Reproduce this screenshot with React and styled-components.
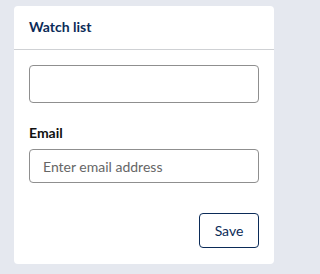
import React from "react";
import styled, { createGlobalStyle } from "styled-components";

const GlobalStyle = createGlobalStyle`
    html, body {
        margin: 0;
        padding: 0;
        background: #e5e8ef;
        font-family: Lato, "Noto Sans", sans-serif;
    }
`;

const Page = styled.div`
    padding: 6px 13px 10px 14px;
`;

const Card = styled.div`
    background: #fff;
    border-radius: 4px;
    width: 260px;
`;

const Header = styled.div`
    height: 43px;
    display: flex;
    align-items: center;
    padding: 0 15px;
    border-bottom: 1px solid #cfd1d4;
`;

const Title = styled.h3`
    margin: 0 0 2px;
    font-size: 14px;
    font-weight: 700;
    color: #0b2b58;
`;

const Body = styled.div`
    padding: 15px 15px 16px;
    display: flex;
    flex-direction: column;
`;

const Input = styled.input`
    box-sizing: border-box;
    width: 100%;
    height: ${(p) => p.$height}px;
    border: 1px solid #8f8f8f;
    border-radius: 4px;
    padding: 0 13px;
    font-family: inherit;
    font-size: 14px;
    color: #333;
    outline: none;
    &::placeholder {
        color: #666;
    }
`;

const Label = styled.label`
    margin: 20px 0 6px;
    font-size: 14px;
    line-height: 20px;
    font-weight: 700;
    color: #111;
`;

const Actions = styled.div`
    display: flex;
    justify-content: flex-end;
    margin-top: 30px;
`;

const Button = styled.button`
    width: 60px;
    height: 35px;
    background: #fff;
    border: 1px solid #0b2b58;
    border-radius: 4px;
    color: #0b2b58;
    font-family: inherit;
    font-size: 14px;
    cursor: pointer;
`;

export default function App() {
    return (
        <Page>
            <GlobalStyle />
            <Card>
                <Header>
                    <Title>Watch list</Title>
                </Header>
                <Body>
                    <Input $height={38} />
                    <Label htmlFor="email">Email</Label>
                    <Input id="email" $height={34} placeholder="Enter email address" />
                    <Actions>
                        <Button>Save</Button>
                    </Actions>
                </Body>
            </Card>
        </Page>
    );
}
